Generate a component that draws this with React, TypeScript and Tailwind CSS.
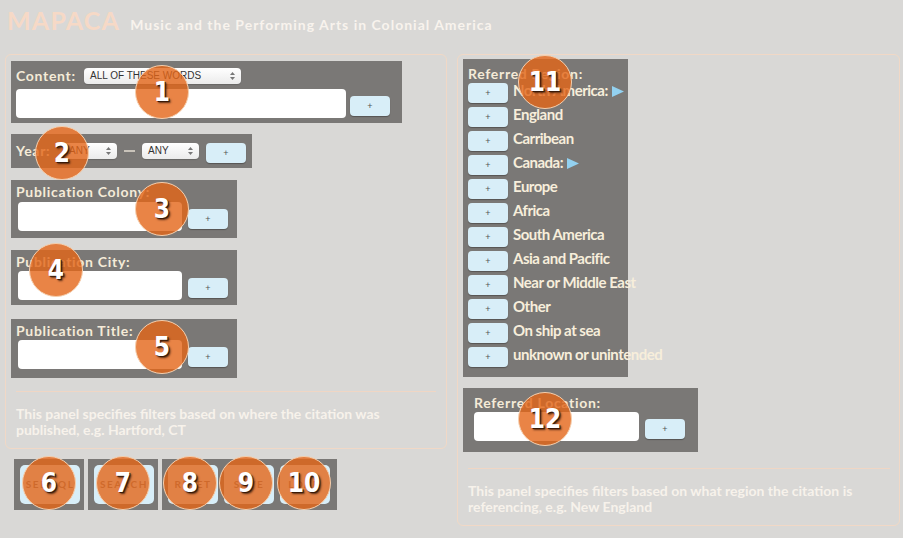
import React from "react";

const Arrows = () => (
  <svg width="5" height="8" viewBox="0 0 5 8" className="shrink-0">
    <polygon points="2.5,0 5,3 0,3" fill="#777" />
    <polygon points="0,5 5,5 2.5,8" fill="#777" />
  </svg>
);

const Select = ({ text, w }: { text: string; w: string }) => (
  <div
    className={`${w} h-[16px] flex items-center justify-between rounded-[4px] bg-linear-to-b from-white to-[#ebebeb] pl-[6px] pr-[6px] text-[10px] leading-[16px] text-[#333] font-['Liberation_Sans',Arial,sans-serif] shadow-[0_1px_1px_rgba(0,0,0,0.15)]`}
  >
    <span>{text}</span>
    <Arrows />
  </div>
);

const Plus = ({ cls = "" }: { cls?: string }) => (
  <div
    className={`w-[40px] h-[20px] shrink-0 rounded-[4px] bg-[#d8eef8] flex items-center justify-center text-[9px] leading-none text-[#555] font-['Liberation_Sans',Arial,sans-serif] shadow-[0_1px_1px_rgba(0,0,0,0.3)] ${cls}`}
  >
    +
  </div>
);

const Input = ({ w }: { w: string }) => (
  <div className={`${w} h-[29px] shrink-0 rounded-[4px] bg-white`} />
);

const Label = ({ text }: { text: string }) => (
  <div className="h-[18px] text-[14px] leading-[18px] font-bold tracking-[0.7px] text-[#f5ebd8] whitespace-nowrap">
    {text}
  </div>
);

const Tri = () => (
  <svg width="12" height="11" viewBox="0 0 12 11" className="inline-block ml-[4px] align-[-1px]">
    <polygon points="0,0 12,5.5 0,11" fill="#93d1f0" />
  </svg>
);

const BigBtn = ({ text, w }: { text: string; w: string }) => (
  <div
    className={`${w} h-[39px] rounded-[5px] bg-[#d8eef8] flex items-center justify-center text-[10px] font-bold tracking-[1.5px] text-[#7a7a7a] whitespace-nowrap overflow-hidden`}
  >
    {text}
  </div>
);

const Badge = ({ n, pos }: { n: string; pos: string }) => (
  <div
    className={`absolute ${pos} w-[54px] h-[54px] rounded-full border border-[#f5cfae] bg-[rgba(228,101,24,0.8)] flex items-center justify-center text-white text-[26px] leading-none font-bold font-['DejaVu_Sans_Condensed','Roboto',sans-serif] [text-shadow:1px_1px_0_#3a1a08,2px_2px_2px_rgba(30,10,0,0.7)]`}
  >
    {n}
  </div>
);

const regions: { name: string; tri?: boolean }[] = [
  { name: "North America:", tri: true },
  { name: "England" },
  { name: "Carribean" },
  { name: "Canada:", tri: true },
  { name: "Europe" },
  { name: "Africa" },
  { name: "South America" },
  { name: "Asia and Pacific" },
  { name: "Near or Middle East" },
  { name: "Other" },
  { name: "On ship at sea" },
  { name: "unknown or unintended" },
];

export default function App() {
  return (
    <div className="relative w-[903px] h-[538px] overflow-hidden bg-[#d9d8d6] font-['Lato',sans-serif]">
      {/* header */}
      <div className="h-[54px] pl-[7px] pt-[5px] flex items-baseline">
        <span className="text-[25px] leading-[30px] font-bold tracking-[1.2px] text-[#f6d9c6]">MAPACA</span>
        <span className="ml-[10px] text-[14px] font-bold tracking-[1px] text-[#f8f3ed]">
          Music and the Performing Arts in Colonial America
        </span>
      </div>

      <div className="flex items-start gap-[10px] pl-[5px]">
        {/* left column */}
        <div className="flex flex-col">
          <div className="w-[442px] rounded-[6px] border border-[#f1d8c6] pt-[6px] pl-[5px] pr-[10px] pb-[10px]">
            {/* content */}
            <div className="w-[391px] bg-[#7a7876] pt-[7px] pl-[5px] pb-[5px]">
              <div className="flex items-center h-[16px]">
                <div className="w-[68px] text-[14px] leading-[16px] font-bold tracking-[0.7px] text-[#f5ebd8]">Content:</div>
                <Select text="ALL OF THESE WORDS" w="w-[157px]" />
              </div>
              <div className="flex items-start mt-[5px]">
                <Input w="w-[330px]" />
                <Plus cls="ml-[4px] mt-[7px]" />
              </div>
            </div>

            {/* year */}
            <div className="mt-[11px] w-[241px] bg-[#7a7876] pt-[9px] pl-[5px] pb-[5px] flex items-start">
              <div className="w-[47px] h-[16px] text-[14px] leading-[16px] font-bold tracking-[0.7px] text-[#f5ebd8]">Year:</div>
              <Select text="ANY" w="w-[54px]" />
              <div className="ml-[7px] mt-[7px] w-[11px] h-[2px] bg-[#c9c3ba]" />
              <div className="ml-[7px]">
                <Select text="ANY" w="w-[57px]" />
              </div>
              <Plus cls="ml-[7px]" />
            </div>

            {/* colony */}
            <div className="mt-[12px] w-[226px] bg-[#7a7876] pt-[3px] pl-[5px] pb-[7px]">
              <Label text="Publication Colony:" />
              <div className="flex items-start mt-[1px] pl-[2px]">
                <Input w="w-[164px]" />
                <Plus cls="ml-[6px] mt-[7px]" />
              </div>
            </div>

            {/* city */}
            <div className="mt-[12px] w-[226px] bg-[#7a7876] pt-[3px] pl-[5px] pb-[5px]">
              <Label text="Publication City:" />
              <div className="flex items-start pl-[2px]">
                <Input w="w-[164px]" />
                <Plus cls="ml-[6px] mt-[7px]" />
              </div>
            </div>

            {/* title */}
            <div className="mt-[14px] w-[226px] bg-[#7a7876] pt-[3px] pl-[5px] pb-[9px]">
              <Label text="Publication Title:" />
              <div className="flex items-start pl-[2px]">
                <Input w="w-[164px]" />
                <Plus cls="ml-[6px] mt-[7px]" />
              </div>
            </div>

            <div className="mt-[13px] ml-[5px] h-px bg-[#f0d6c4]" />
            <p className="mt-[14px] pl-[5px] text-[14px] leading-[16px] font-bold text-[#f7f2eb]">
              This panel specifies filters based on where the citation was
              <br />
              published, e.g. Hartford, CT
            </p>
          </div>

          {/* buttons row */}
          <div className="mt-[10px] ml-[9px] flex gap-[4px]">
            <div className="w-[70px] h-[51px] bg-[#7a7876] pt-[6px] pl-[6px]">
              <BigBtn text="SEE SQL" w="w-[60px]" />
            </div>
            <div className="w-[70px] h-[51px] bg-[#7a7876] pt-[6px] pl-[6px]">
              <BigBtn text="SEARCH" w="w-[60px]" />
            </div>
            <div className="w-[175px] h-[51px] bg-[#7a7876] pt-[6px] pl-[6px] flex gap-[6px]">
              <BigBtn text="RESET" w="w-[50px]" />
              <BigBtn text="SAVE" w="w-[50px]" />
              <BigBtn text="LOAD" w="w-[50px]" />
            </div>
          </div>
        </div>

        {/* right panel */}
        <div className="w-[443px] rounded-[6px] border border-[#f1d8c6] pt-[4px] pl-[5px] pr-[9px] pb-[10px]">
          <div className="w-[165px] bg-[#7a7876] pt-[6px] pl-[5px] pb-[10px]">
            <Label text="Referred Region:" />
            <div className="flex flex-col gap-[4px]">
              {regions.map((r) => (
                <div key={r.name} className="flex items-start h-[20px]">
                  <Plus />
                  <span className="ml-[5px] text-[15px] leading-[14px] font-bold tracking-[-0.5px] text-[#f7eedb] whitespace-nowrap">
                    {r.name}
                    {r.tri && <Tri />}
                  </span>
                </div>
              ))}
            </div>
          </div>

          <div className="mt-[11px] w-[235px] bg-[#7a7876] pt-[6px] pl-[11px] pb-[11px]">
            <Label text="Referred Location:" />
            <div className="flex items-start">
              <Input w="w-[165px]" />
              <Plus cls="ml-[6px] mt-[7px]" />
            </div>
          </div>

          <div className="mt-[16px] ml-[5px] h-px bg-[#f0d6c4]" />
          <p className="mt-[14px] pl-[5px] text-[14px] leading-[16px] font-bold text-[#f7f2eb]">
            This panel specifies filters based on what region the citation is
            <br />
            referencing, e.g. New England
          </p>
        </div>
      </div>

      {/* badges */}
      <Badge n="1" pos="left-[135px] top-[65px]" />
      <Badge n="2" pos="left-[35px] top-[126px]" />
      <Badge n="3" pos="left-[135px] top-[182px]" />
      <Badge n="4" pos="left-[29px] top-[243px]" />
      <Badge n="5" pos="left-[135px] top-[320px]" />
      <Badge n="6" pos="left-[22px] top-[456px]" />
      <Badge n="7" pos="left-[96px] top-[456px]" />
      <Badge n="8" pos="left-[163px] top-[456px]" />
      <Badge n="9" pos="left-[219px] top-[456px]" />
      <Badge n="10" pos="left-[277px] top-[456px]" />
      <Badge n="11" pos="left-[518px] top-[55px]" />
      <Badge n="12" pos="left-[518px] top-[392px]" />
    </div>
  );
}
